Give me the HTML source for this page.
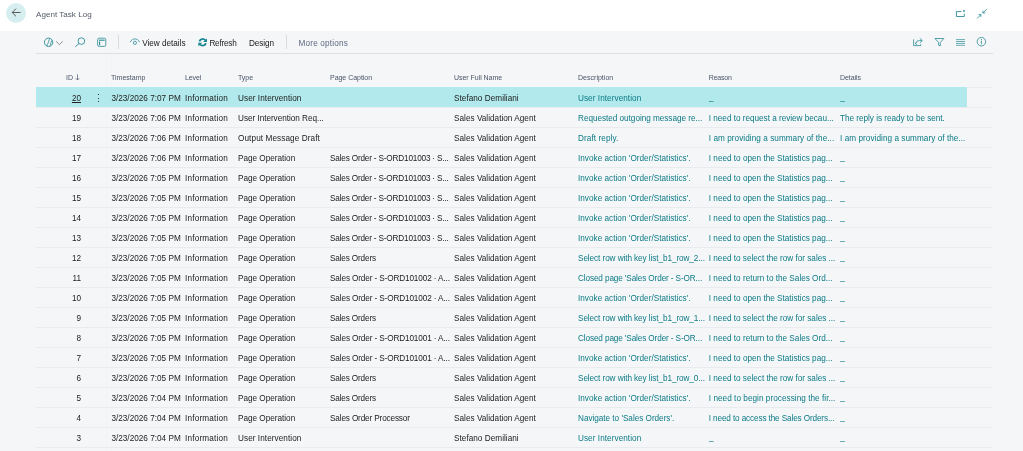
<!DOCTYPE html>
<html lang="en">
<head>
<meta charset="utf-8">
<title>Agent Task Log</title>
<style>
html,body{margin:0;padding:0;}
body{width:1023px;height:451px;overflow:hidden;background:#f5f6f8;font-family:"Liberation Sans",sans-serif;position:relative;color:#212121;}
.bg{position:absolute;left:0;top:0;width:1023px;height:31px;background:#fff;}
.wrap{position:absolute;left:0;top:0;width:1023px;height:451px;will-change:transform;}
.titlebar{position:absolute;left:0;top:0;width:1023px;height:31px;}
.back{position:absolute;left:6px;top:2.5px;width:20.4px;height:20.4px;border-radius:50%;background:#d6eef0;}
.title{position:absolute;left:36px;top:9px;font-size:8.1px;line-height:12px;color:#555b66;white-space:nowrap;}
.tb{position:absolute;top:31px;left:0;width:1023px;height:24px;}
.tbline{position:absolute;left:36px;top:53px;width:956.5px;height:1px;background:#dcdfe3;}
.tbt{position:absolute;top:38px;font-size:8.2px;line-height:12px;white-space:nowrap;color:#212121;}
.sep{position:absolute;top:35px;width:1px;height:14px;background:#d8dbdf;}
.ic{position:absolute;}
.hdr{position:absolute;top:73px;font-size:7px;line-height:10px;color:#4a5568;white-space:nowrap;}
.grid{position:absolute;left:36px;top:87px;width:956px;}
.row{position:relative;height:19.03px;border-top:1px solid #e9ebee;width:956px;background:linear-gradient(#e4e6e9,#e4e6e9) no-repeat 0 -1px/931px 1px;background-origin:border-box;}
.selbg{position:absolute;left:0;top:-1px;width:931px;height:20px;background:#b1e9ec;}
.c{position:absolute;top:1px;height:20px;line-height:20px;font-size:8.2px;white-space:nowrap;}
.c0{left:0;width:45px;text-align:right;}
.idl{text-decoration:underline;}
.c1{left:75.4px;}
.c2{left:149px;}
.c3{left:202px;}
.c4{left:294px;}
.c5{left:418px;}
.c6{left:542px;}
.c7{left:672.8px;}
.c8{left:804px;}
.lk{color:#0b7a85;}
.us{margin-left:0.3px;top:0;}
.frz{position:absolute;left:106px;top:54px;width:1px;height:397px;background:#f2f3f5;}
.dots{position:absolute;left:62px;top:6.4px;width:1.1px;}
.dots i{display:block;width:1.1px;height:1.1px;background:#333;margin-bottom:2.1px;}
</style>
</head>
<body>
<div class="bg"></div>
<div class="wrap">
<div class="titlebar">
<div class="back"></div>
<div class="title">Agent Task Log</div>
</div>
<div class="tbline"></div>
<div class="frz"></div>
<svg class="icons" width="1023" height="56" viewBox="0 0 1023 56" style="position:absolute;left:0;top:0" fill="none" stroke-linecap="butt">
<!-- back arrow -->
<path d="M20.6 12.5H12.3M16 8.7L12.2 12.5L16 16.3" stroke="#4a4a4a" stroke-width="0.9"/>
<!-- copilot -->
<g stroke="#2b8c96" stroke-width="0.9">
<circle cx="48.6" cy="42.3" r="4.2"/>
<path d="M49.8 38.4C48.5 40.3 49.1 41.8 47.9 43.4C47.2 44.4 46.9 45.2 47 46.2M51.7 40.4C50.8 42.2 51.1 43.4 50.1 45.6" stroke-width="0.8"/>
</g>
<path d="M56 41.3L59.4 44.6L62.8 41.3" stroke="#777" stroke-width="0.8"/>
<!-- search -->
<g stroke="#2b8c96" stroke-width="0.9">
<circle cx="81.4" cy="41.1" r="3.3"/>
<path d="M79 43.5L75.3 46.8"/>
</g>
<!-- table icon -->
<g stroke="#2b8c96">
<rect x="97.6" y="38.2" width="8.2" height="8.2" rx="1.5" stroke-width="0.8"/>
<path d="M98.9 40.2H104.7" stroke-width="1.1"/>
<path d="M99.6 41.6V45.3" stroke-width="1.1"/>
</g>
<!-- eye -->
<g stroke="#2b8c96" stroke-width="0.8">
<path d="M130.2 42.1C131.4 39.8 133.2 38.9 134.9 38.9C136.6 38.9 138.4 39.8 139.6 42.1"/>
<circle cx="134.9" cy="42.8" r="1.6"/>
</g>
<!-- refresh -->
<g transform="translate(202.65 42.35) scale(0.98 0.92) translate(-202.6 -42.6)">
<g stroke="#11838e" stroke-width="1.8">
<path d="M199.3 41.6A3.5 3.5 0 0 1 205.3 40.2"/>
<path d="M205.9 43.6A3.5 3.5 0 0 1 199.9 45"/>
</g>
<path d="M207 38.4V42.3H203.1Z M198.2 46.8V42.9H202.1Z" fill="#11838e" stroke="none"/>
</g>
<!-- popout -->
<g stroke="#2b8c96" stroke-width="0.9">
<path d="M961.4 11.6H956.4V16.5H964.3V13.7"/>
</g>
<circle cx="964" cy="11" r="0.9" fill="#2b8c96"/>
<!-- collapse -->
<g stroke="#2b8c96" stroke-width="0.8">
<path d="M986.8 9.1L982.9 13M982.9 10.7V13H985.2"/>
<path d="M977 18.5L980.9 14.6M978.6 14.6H980.9V16.9"/>
</g>
<!-- share -->
<g stroke="#2b8c96" stroke-width="0.8">
<path d="M913.6 39.4V45.6H920.7V44.1"/>
<path d="M915.5 43.6C916 41.6 917.6 40.6 919.6 40.6H922M919.9 38.3L922.3 40.6L919.9 42.9M916.9 42.2L915.4 43.7L917.2 44.6"/>
</g>
<!-- filter -->
<path d="M935 38.5H943.8L940.3 42.5V45.9L938.6 45.2V42.5Z" stroke="#2b8c96" stroke-width="0.8" stroke-linejoin="round"/>
<!-- list -->
<path d="M956 39.6H965M956 41.5H965M956 43.4H965M956 45.3H965" stroke="#2b8c96" stroke-width="0.7"/>
<!-- info -->
<g stroke="#2b8c96" stroke-width="0.8">
<circle cx="981.4" cy="41.7" r="4.25"/>
<path d="M981.4 40.7V44.3" />
</g>
<circle cx="981.4" cy="39.6" r="0.55" fill="#2b8c96"/>
</svg>
<div class="tbt" style="left:142.2px;letter-spacing:-0.02px">View details</div>
<div class="tbt" style="left:209.4px;letter-spacing:-0.23px">Refresh</div>
<div class="tbt" style="left:248.9px;letter-spacing:-0.06px">Design</div>
<div class="tbt" style="left:298.5px;letter-spacing:0.18px;color:#5d6982">More options</div>
<div class="sep" style="left:118px"></div>
<div class="sep" style="left:286px"></div>
<div class="hdr" style="left:66px">ID</div>
<svg style="position:absolute;left:75px;top:73px" width="6" height="8" viewBox="0 0 6 8" fill="none" stroke="#4a5568" stroke-width="0.7"><path d="M2.5 1.4V7M0.7 5.2L2.5 7L4.3 5.2"/></svg>
<div class="hdr" style="left:111px">Timestamp</div>
<div class="hdr" style="left:185px;letter-spacing:-0.12px">Level</div>
<div class="hdr" style="left:238px;letter-spacing:-0.05px">Type</div>
<div class="hdr" style="left:330px;letter-spacing:-0.03px">Page Caption</div>
<div class="hdr" style="left:454px;letter-spacing:-0.035px">User Full Name</div>
<div class="hdr" style="left:578px;letter-spacing:0.02px">Description</div>
<div class="hdr" style="left:708.8px;letter-spacing:-0.2px">Reason</div>
<div class="hdr" style="left:840px;letter-spacing:-0.07px">Details</div>

<div class="grid">
<div class="row sel">
<div class="selbg"></div>
<span class="c c0"><a class="idl">20</a></span>
<span class="dots"><i></i><i></i><i></i></span>
<span class="c c1" style="letter-spacing:0.01px">3/23/2026 7:07 PM</span>
<span class="c c2" style="letter-spacing:0.194px">Information</span>
<span class="c c3" style="letter-spacing:0.061px">User Intervention</span>
<span class="c c5" style="letter-spacing:0.031px">Stefano Demiliani</span>
<span class="c c6 lk" style="letter-spacing:0.055px">User Intervention</span>
<span class="c c7 lk us">_</span>
<span class="c c8 lk us">_</span>
</div>
<div class="row">
<span class="c c0">19</span>
<span class="c c1" style="letter-spacing:0.01px">3/23/2026 7:06 PM</span>
<span class="c c2" style="letter-spacing:0.194px">Information</span>
<span class="c c3" style="letter-spacing:-0.032px">User Intervention Req...</span>
<span class="c c5" style="letter-spacing:0.021px">Sales Validation Agent</span>
<span class="c c6 lk" style="letter-spacing:-0.03px">Requested outgoing message re...</span>
<span class="c c7 lk" style="letter-spacing:-0.021px">I need to request a review becau...</span>
<span class="c c8 lk" style="letter-spacing:-0.026px">The reply is ready to be sent.</span>
</div>
<div class="row">
<span class="c c0">18</span>
<span class="c c1" style="letter-spacing:0.01px">3/23/2026 7:06 PM</span>
<span class="c c2" style="letter-spacing:0.194px">Information</span>
<span class="c c3" style="letter-spacing:0.095px">Output Message Draft</span>
<span class="c c5" style="letter-spacing:0.021px">Sales Validation Agent</span>
<span class="c c6 lk" style="letter-spacing:0.08px">Draft reply.</span>
<span class="c c7 lk" style="letter-spacing:0.048px">I am providing a summary of the...</span>
<span class="c c8 lk" style="letter-spacing:0.048px">I am providing a summary of the...</span>
</div>
<div class="row">
<span class="c c0">17</span>
<span class="c c1" style="letter-spacing:0.01px">3/23/2026 7:06 PM</span>
<span class="c c2" style="letter-spacing:0.194px">Information</span>
<span class="c c3" style="letter-spacing:-0.011px">Page Operation</span>
<span class="c c4" style="letter-spacing:-0.176px">Sales Order - S-ORD101003 · S...</span>
<span class="c c5" style="letter-spacing:0.021px">Sales Validation Agent</span>
<span class="c c6 lk" style="letter-spacing:0.021px">Invoke action 'Order/Statistics'.</span>
<span class="c c7 lk">I need to open the Statistics pag...</span>
<span class="c c8 lk us">_</span>
</div>
<div class="row">
<span class="c c0">16</span>
<span class="c c1" style="letter-spacing:0.01px">3/23/2026 7:05 PM</span>
<span class="c c2" style="letter-spacing:0.194px">Information</span>
<span class="c c3" style="letter-spacing:-0.011px">Page Operation</span>
<span class="c c4" style="letter-spacing:-0.176px">Sales Order - S-ORD101003 · S...</span>
<span class="c c5" style="letter-spacing:0.021px">Sales Validation Agent</span>
<span class="c c6 lk" style="letter-spacing:0.021px">Invoke action 'Order/Statistics'.</span>
<span class="c c7 lk">I need to open the Statistics pag...</span>
<span class="c c8 lk us">_</span>
</div>
<div class="row">
<span class="c c0">15</span>
<span class="c c1" style="letter-spacing:0.01px">3/23/2026 7:05 PM</span>
<span class="c c2" style="letter-spacing:0.194px">Information</span>
<span class="c c3" style="letter-spacing:-0.011px">Page Operation</span>
<span class="c c4" style="letter-spacing:-0.176px">Sales Order - S-ORD101003 · S...</span>
<span class="c c5" style="letter-spacing:0.021px">Sales Validation Agent</span>
<span class="c c6 lk" style="letter-spacing:0.021px">Invoke action 'Order/Statistics'.</span>
<span class="c c7 lk">I need to open the Statistics pag...</span>
<span class="c c8 lk us">_</span>
</div>
<div class="row">
<span class="c c0">14</span>
<span class="c c1" style="letter-spacing:0.01px">3/23/2026 7:05 PM</span>
<span class="c c2" style="letter-spacing:0.194px">Information</span>
<span class="c c3" style="letter-spacing:-0.011px">Page Operation</span>
<span class="c c4" style="letter-spacing:-0.176px">Sales Order - S-ORD101003 · S...</span>
<span class="c c5" style="letter-spacing:0.021px">Sales Validation Agent</span>
<span class="c c6 lk" style="letter-spacing:0.021px">Invoke action 'Order/Statistics'.</span>
<span class="c c7 lk">I need to open the Statistics pag...</span>
<span class="c c8 lk us">_</span>
</div>
<div class="row">
<span class="c c0">13</span>
<span class="c c1" style="letter-spacing:0.01px">3/23/2026 7:05 PM</span>
<span class="c c2" style="letter-spacing:0.194px">Information</span>
<span class="c c3" style="letter-spacing:-0.011px">Page Operation</span>
<span class="c c4" style="letter-spacing:-0.176px">Sales Order - S-ORD101003 · S...</span>
<span class="c c5" style="letter-spacing:0.021px">Sales Validation Agent</span>
<span class="c c6 lk" style="letter-spacing:0.021px">Invoke action 'Order/Statistics'.</span>
<span class="c c7 lk">I need to open the Statistics pag...</span>
<span class="c c8 lk us">_</span>
</div>
<div class="row">
<span class="c c0">12</span>
<span class="c c1" style="letter-spacing:0.01px">3/23/2026 7:05 PM</span>
<span class="c c2" style="letter-spacing:0.194px">Information</span>
<span class="c c3" style="letter-spacing:-0.011px">Page Operation</span>
<span class="c c4" style="letter-spacing:-0.157px">Sales Orders</span>
<span class="c c5" style="letter-spacing:0.021px">Sales Validation Agent</span>
<span class="c c6 lk" style="letter-spacing:-0.078px">Select row with key list_b1_row_2...</span>
<span class="c c7 lk" style="letter-spacing:-0.01px">I need to select the row for sales ...</span>
<span class="c c8 lk us">_</span>
</div>
<div class="row">
<span class="c c0">11</span>
<span class="c c1" style="letter-spacing:0.01px">3/23/2026 7:05 PM</span>
<span class="c c2" style="letter-spacing:0.194px">Information</span>
<span class="c c3" style="letter-spacing:-0.011px">Page Operation</span>
<span class="c c4" style="letter-spacing:-0.124px">Sales Order - S-ORD101002 · A...</span>
<span class="c c5" style="letter-spacing:0.021px">Sales Validation Agent</span>
<span class="c c6 lk" style="letter-spacing:-0.117px">Closed page 'Sales Order - S-OR...</span>
<span class="c c7 lk">I need to return to the Sales Ord...</span>
<span class="c c8 lk us">_</span>
</div>
<div class="row">
<span class="c c0">10</span>
<span class="c c1" style="letter-spacing:0.01px">3/23/2026 7:05 PM</span>
<span class="c c2" style="letter-spacing:0.194px">Information</span>
<span class="c c3" style="letter-spacing:-0.011px">Page Operation</span>
<span class="c c4" style="letter-spacing:-0.124px">Sales Order - S-ORD101002 · A...</span>
<span class="c c5" style="letter-spacing:0.021px">Sales Validation Agent</span>
<span class="c c6 lk" style="letter-spacing:0.021px">Invoke action 'Order/Statistics'.</span>
<span class="c c7 lk">I need to open the Statistics pag...</span>
<span class="c c8 lk us">_</span>
</div>
<div class="row">
<span class="c c0">9</span>
<span class="c c1" style="letter-spacing:0.01px">3/23/2026 7:05 PM</span>
<span class="c c2" style="letter-spacing:0.194px">Information</span>
<span class="c c3" style="letter-spacing:-0.011px">Page Operation</span>
<span class="c c4" style="letter-spacing:-0.157px">Sales Orders</span>
<span class="c c5" style="letter-spacing:0.021px">Sales Validation Agent</span>
<span class="c c6 lk" style="letter-spacing:-0.078px">Select row with key list_b1_row_1...</span>
<span class="c c7 lk" style="letter-spacing:-0.01px">I need to select the row for sales ...</span>
<span class="c c8 lk us">_</span>
</div>
<div class="row">
<span class="c c0">8</span>
<span class="c c1" style="letter-spacing:0.01px">3/23/2026 7:05 PM</span>
<span class="c c2" style="letter-spacing:0.194px">Information</span>
<span class="c c3" style="letter-spacing:-0.011px">Page Operation</span>
<span class="c c4" style="letter-spacing:-0.124px">Sales Order - S-ORD101001 · A...</span>
<span class="c c5" style="letter-spacing:0.021px">Sales Validation Agent</span>
<span class="c c6 lk" style="letter-spacing:-0.117px">Closed page 'Sales Order - S-OR...</span>
<span class="c c7 lk">I need to return to the Sales Ord...</span>
<span class="c c8 lk us">_</span>
</div>
<div class="row">
<span class="c c0">7</span>
<span class="c c1" style="letter-spacing:0.01px">3/23/2026 7:05 PM</span>
<span class="c c2" style="letter-spacing:0.194px">Information</span>
<span class="c c3" style="letter-spacing:-0.011px">Page Operation</span>
<span class="c c4" style="letter-spacing:-0.124px">Sales Order - S-ORD101001 · A...</span>
<span class="c c5" style="letter-spacing:0.021px">Sales Validation Agent</span>
<span class="c c6 lk" style="letter-spacing:0.021px">Invoke action 'Order/Statistics'.</span>
<span class="c c7 lk">I need to open the Statistics pag...</span>
<span class="c c8 lk us">_</span>
</div>
<div class="row">
<span class="c c0">6</span>
<span class="c c1" style="letter-spacing:0.01px">3/23/2026 7:05 PM</span>
<span class="c c2" style="letter-spacing:0.194px">Information</span>
<span class="c c3" style="letter-spacing:-0.011px">Page Operation</span>
<span class="c c4" style="letter-spacing:-0.157px">Sales Orders</span>
<span class="c c5" style="letter-spacing:0.021px">Sales Validation Agent</span>
<span class="c c6 lk" style="letter-spacing:-0.078px">Select row with key list_b1_row_0...</span>
<span class="c c7 lk" style="letter-spacing:-0.01px">I need to select the row for sales ...</span>
<span class="c c8 lk us">_</span>
</div>
<div class="row">
<span class="c c0">5</span>
<span class="c c1" style="letter-spacing:0.01px">3/23/2026 7:04 PM</span>
<span class="c c2" style="letter-spacing:0.194px">Information</span>
<span class="c c3" style="letter-spacing:-0.011px">Page Operation</span>
<span class="c c4" style="letter-spacing:-0.157px">Sales Orders</span>
<span class="c c5" style="letter-spacing:0.021px">Sales Validation Agent</span>
<span class="c c6 lk" style="letter-spacing:0.021px">Invoke action 'Order/Statistics'.</span>
<span class="c c7 lk" style="letter-spacing:0.039px">I need to begin processing the fir...</span>
<span class="c c8 lk us">_</span>
</div>
<div class="row">
<span class="c c0">4</span>
<span class="c c1" style="letter-spacing:0.01px">3/23/2026 7:04 PM</span>
<span class="c c2" style="letter-spacing:0.194px">Information</span>
<span class="c c3" style="letter-spacing:-0.011px">Page Operation</span>
<span class="c c4" style="letter-spacing:-0.144px">Sales Order Processor</span>
<span class="c c5" style="letter-spacing:0.021px">Sales Validation Agent</span>
<span class="c c6 lk" style="letter-spacing:-0.025px">Navigate to 'Sales Orders'.</span>
<span class="c c7 lk" style="letter-spacing:-0.127px">I need to access the Sales Orders...</span>
<span class="c c8 lk us">_</span>
</div>
<div class="row">
<span class="c c0">3</span>
<span class="c c1" style="letter-spacing:0.01px">3/23/2026 7:04 PM</span>
<span class="c c2" style="letter-spacing:0.194px">Information</span>
<span class="c c3" style="letter-spacing:0.061px">User Intervention</span>
<span class="c c5" style="letter-spacing:0.031px">Stefano Demiliani</span>
<span class="c c6 lk" style="letter-spacing:0.055px">User Intervention</span>
<span class="c c7 lk us">_</span>
<span class="c c8 lk us">_</span>
</div>
<div class="row"></div>
</div>
</div>
</body>
</html>
